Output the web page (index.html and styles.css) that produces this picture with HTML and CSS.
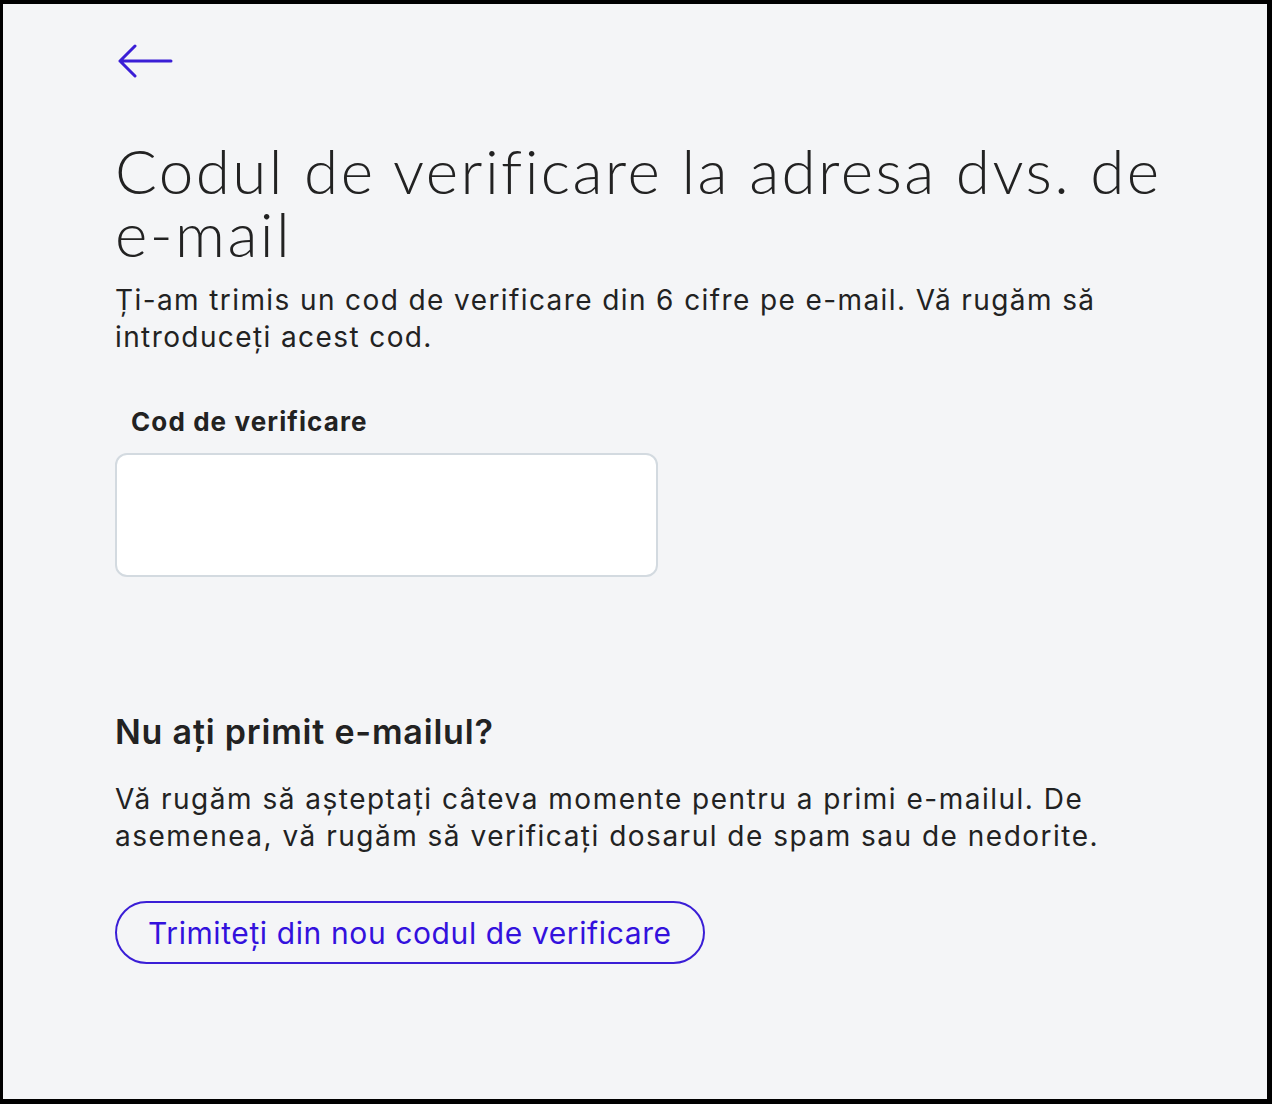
FILE: index.html
```html
<!DOCTYPE html>
<html lang="ro">
<head>
    <meta charset="UTF-8">
    <title>Cod de verificare</title>
    <link rel="stylesheet" href="styles.css">
</head>
<body>
    <div class="frame">
        <main class="page">
            <a class="back" href="#" aria-label="Înapoi">
                <svg width="56" height="36" viewBox="0 0 56 36" fill="none" stroke="currentColor" stroke-width="3" stroke-linecap="round" stroke-linejoin="round">
                    <path d="M53 18H2M17 3L2 18l15 15"/>
                </svg>
            </a>

            <h1>Codul de verificare la adresa dvs. de <span class="nowrap">e-mail</span></h1>
            <p class="lead">Ți-am trimis un cod de verificare din 6 cifre pe e-mail. Vă rugăm să introduceți acest cod.</p>

            <label class="label" for="cod">Cod de verificare</label>
            <input class="field" id="cod" type="text">

            <h2>Nu ați primit e-mailul?</h2>
            <p class="text">Vă rugăm să așteptați câteva momente pentru a primi e-mailul. De asemenea, vă rugăm să verificați dosarul de spam sau de nedorite.</p>

            <button class="resend" type="button">Trimiteți din nou codul de verificare</button>
        </main>
    </div>
</body>
</html>
```

FILE: styles.css
```css
html, body {
    margin: 0;
    padding: 0;
    height: 100%;
}
body {
    background-color: #000;
    font-family: Inter, "Noto Sans", sans-serif;
    color: #222;
}
.frame {
    box-sizing: border-box;
    height: 1104px;
    padding: 4px 5px 5px 3px;
}
.page {
    box-sizing: border-box;
    height: 100%;
    background-color: #f4f5f7;
    padding: 39px 100px 0 112px;
    display: flex;
    flex-direction: column;
    align-items: flex-start;
}
.back {
    color: #3a1ed6;
    display: block;
    margin-left: 3px;
    line-height: 0;
}
h1 {
    font-family: Lato, "Open Sans", sans-serif;
    font-weight: 300;
    font-size: 62px;
    line-height: 63px;
    color: #222;
    margin: 60px 0 0;
    letter-spacing: 2.4px;
}
.nowrap {
    display: inline-block;
    white-space: nowrap;
}
.lead {
    font-size: 28px;
    line-height: 37px;
    letter-spacing: 1.4px;
    margin: 17px 0 0;
}
.label {
    font-weight: 700;
    font-size: 26px;
    letter-spacing: 1.1px;
    margin: 50px 0 0 16px;
}
.field {
    box-sizing: border-box;
    width: 543px;
    height: 124px;
    margin-top: 16px;
    border: 2px solid #d3dae0;
    border-radius: 12px;
    background-color: #fff;
}
h2 {
    font-weight: 600;
    font-size: 34px;
    letter-spacing: 0.8px;
    margin: 134px 0 0;
}
.text {
    font-size: 28px;
    line-height: 37px;
    letter-spacing: 1.5px;
    margin: 29px 0 0;
}
.resend {
    margin-top: 46px;
    height: 63px;
    padding: 0 31px;
    border: 2px solid #3a1ed6;
    border-radius: 32px;
    background: transparent;
    color: #3311dd;
    font-family: Inter, "Noto Sans", sans-serif;
    font-size: 30px;
    letter-spacing: 0.6px;
}
```
